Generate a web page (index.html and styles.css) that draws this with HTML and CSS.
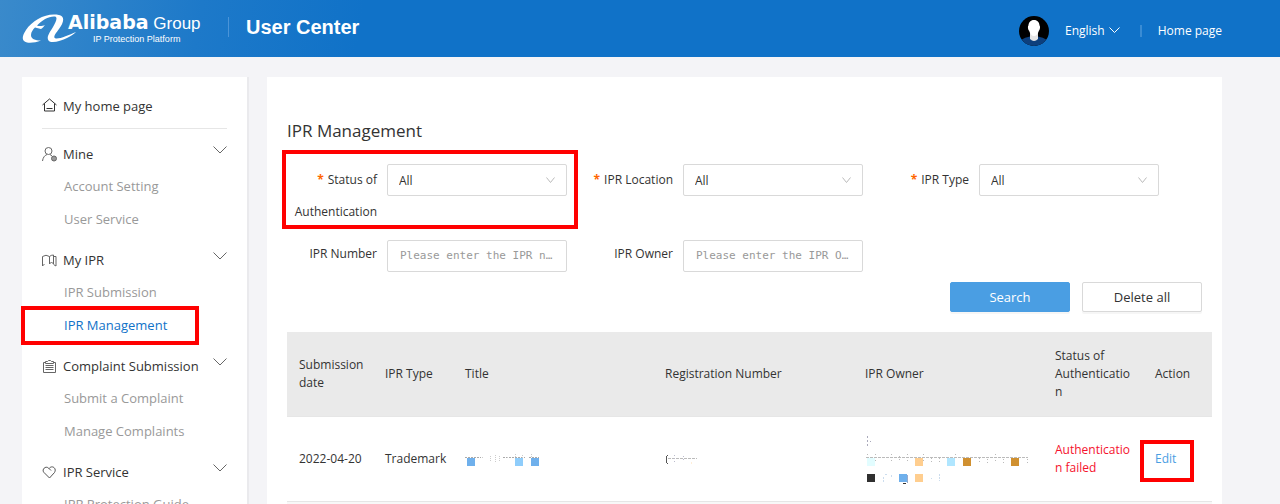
FILE: index.html
```html
<!DOCTYPE html>
<html lang="en">
<head>
  <meta charset="UTF-8" />
  <title>IPR Management</title>
  <link rel="stylesheet" href="styles.css">
</head>
<body>
  <header class="header">
    <a class="logo" href="#">
      <svg class="logo-mark" width="54" height="30" viewBox="0 0 54 30" fill="#fff">
        <path d="M33 0.500C22 0 10 7 4 16C0 22-1 27 5 28.500C9 29 14 28.500 19 26.500C13 26.500 9 25 9 21C9 18 11 15.500 13 13.500L19 15C20.500 14 22 12.500 23 11C21 12 17 12.500 15 11.500C20 6 27 2 33 2.500C36 3 34 8 31 13C28 18 24 23 26.500 26.500C29 30 39 27 45 24C49 22 52 20 54 18C47 21 38 25 34 24.500C30 24 34 19 37 15C41 10 43.500 3 38 1.300C36.500 0.700 35 0.500 33 0.500Z"/>
      </svg>
      <span class="logo-text">
        <span class="logo-name"><b>Alibaba</b> Group</span>
        <span class="logo-sub">IP Protection Platform</span>
      </span>
    </a>
    <h1 class="site-title">User Center</h1>
    <div class="header-right">
      <svg class="avatar" width="30" height="30" viewBox="0 0 30 30">
        <defs>
          <clipPath id="round"><circle cx="15" cy="15" r="15"/></clipPath>
        </defs>
        <g clip-path="url(#round)">
          <rect width="30" height="30" fill="#000"/>
          <path d="M2 30V24Q6 21 11 20.500H19Q24 21 28 24V30Z" fill="#0d3f7d"/>
          <path d="M11 17H19V23Q15 27 11 23Z" fill="#e6e6e6"/>
          <path d="M15 4C18.500 4 20.500 6.500 20.500 9.500C21.500 10 21 14 20 14.500C19 18 17 20 15 20C13 20 11 18 10 14.500C9 14 8.500 10 9.500 9.500C9.500 6.500 11.500 4 15 4Z" fill="#fff"/>
        </g>
      </svg>
      <a class="language" href="#">English
        <svg width="11" height="7" viewBox="0 0 11 7" fill="none" stroke="#fff"><path d="M0.500 0.500L5.500 5.500L10.500 0.500"/></svg>
      </a>
      <a class="home-link" href="#">Home page</a>
    </div>
  </header>

  <div class="page">
    <nav class="sidebar">
      <a class="nav-home" href="#">
        <svg width="15" height="15" viewBox="0 0 15 15" fill="none" stroke="#333"><path d="M0.500 7L7.500 1L14.500 7M2.500 5.500V13H12.500V5.500M4.500 10.500H10.500"/></svg>
        My home page
      </a>

      <div class="nav-group">
        <a class="nav-title" href="#">
          <svg width="15" height="15" viewBox="0 0 15 15" fill="none" stroke="#666"><circle cx="6.500" cy="4" r="3.500"/><path d="M0.500 14C1 10.500 2.500 8.500 5 7.500M8 7.500L10 9"/><circle cx="12" cy="11.500" r="2.500" fill="#999"/></svg>
          Mine
          <svg class="chevron" width="14" height="8" viewBox="0 0 14 8" fill="none" stroke="#666"><path d="M0.500 0.500L7 7L13.500 0.500"/></svg>
        </a>
        <a class="nav-item" href="#">Account Setting</a>
        <a class="nav-item" href="#">User Service</a>
      </div>

      <div class="nav-group">
        <a class="nav-title" href="#">
          <svg width="15" height="15" viewBox="0 0 15 15" fill="none" stroke="#666"><path d="M0.500 13V3.500Q4 1 7.500 3.500V11M0.500 12.500L2.500 11.500M7.500 3.500Q9 2 11.500 2V11L9.500 9L7.500 11M11.500 3.500L14 3.500V13L11.500 11.500"/></svg>
          My IPR
          <svg class="chevron" width="14" height="8" viewBox="0 0 14 8" fill="none" stroke="#666"><path d="M0.500 0.500L7 7L13.500 0.500"/></svg>
        </a>
        <a class="nav-item" href="#">IPR Submission</a>
        <a class="nav-item active" href="#">IPR Management<span class="mark mark-nav"></span></a>
      </div>

      <div class="nav-group">
        <a class="nav-title" href="#">
          <svg width="15" height="15" viewBox="0 0 15 15" fill="none" stroke="#666"><path d="M3.500 3.500H1.500V13.500H13.500V3.500H11.500M3.500 4.500V2.500H5.500L6.500 1.500H8.500L9.500 2.500H11.500V4.500ZM3.500 6.500H11.500M3.500 8.500H11.500M3.500 10.500H11.500"/></svg>
          Complaint Submission
          <svg class="chevron" width="14" height="8" viewBox="0 0 14 8" fill="none" stroke="#666"><path d="M0.500 0.500L7 7L13.500 0.500"/></svg>
        </a>
        <a class="nav-item" href="#">Submit a Complaint</a>
        <a class="nav-item" href="#">Manage Complaints</a>
      </div>

      <div class="nav-group">
        <a class="nav-title" href="#">
          <svg width="15" height="15" viewBox="0 0 15 15" fill="none" stroke="#555"><path d="M7.500 13L1.800 7.300C-0.500 4.500 3.500 0.500 6.500 3L9 5.500M7 3.500C9 1 12 1.500 13 4C13.500 5.500 13 6.500 12.500 7.500L7.500 13"/></svg>
          IPR Service
          <svg class="chevron" width="14" height="8" viewBox="0 0 14 8" fill="none" stroke="#666"><path d="M0.500 0.500L7 7L13.500 0.500"/></svg>
        </a>
        <a class="nav-item" href="#">IPR Protection Guide</a>
      </div>
    </nav>

    <main class="content">
      <h2>IPR Management</h2>

      <form class="search-form">
        <div class="form-row">
          <div class="field">
            <label for="status" class="required">Status of Authentication</label>
            <div class="select-box">
              <select id="status"><option>All</option></select>
              <svg width="9" height="7" viewBox="0 0 9 7" fill="none" stroke="#bbb"><path d="M0.500 0.500L4.500 5.500L8.500 0.500"/></svg>
            </div>
            <span class="mark mark-field"></span>
          </div>
          <div class="field">
            <label for="location" class="required">IPR Location</label>
            <div class="select-box">
              <select id="location"><option>All</option></select>
              <svg width="9" height="7" viewBox="0 0 9 7" fill="none" stroke="#bbb"><path d="M0.500 0.500L4.500 5.500L8.500 0.500"/></svg>
            </div>
          </div>
          <div class="field">
            <label for="type" class="required">IPR Type</label>
            <div class="select-box">
              <select id="type"><option>All</option></select>
              <svg width="9" height="7" viewBox="0 0 9 7" fill="none" stroke="#bbb"><path d="M0.500 0.500L4.500 5.500L8.500 0.500"/></svg>
            </div>
          </div>
        </div>
        <div class="form-row text-row">
          <div class="field">
            <label for="number">IPR Number</label>
            <input type="text" id="number" placeholder="Please enter the IPR number" />
          </div>
          <div class="field">
            <label for="owner">IPR Owner</label>
            <input type="text" id="owner" placeholder="Please enter the IPR Owner" />
          </div>
        </div>
        <div class="buttons">
          <button type="button" class="search-button">Search</button>
          <button type="reset" class="delete-button">Delete all</button>
        </div>
      </form>

      <table>
        <colgroup>
          <col class="col-date"><col class="col-type"><col class="col-wide"><col class="col-wide"><col><col class="col-status"><col class="col-action">
        </colgroup>
        <thead>
          <tr>
            <th>Submission date</th>
            <th>IPR Type</th>
            <th>Title</th>
            <th>Registration Number</th>
            <th>IPR Owner</th>
            <th class="status">Status of Authentication</th>
            <th>Action</th>
          </tr>
        </thead>
        <tbody>
          <tr>
            <td>2022-04-20</td>
            <td>Trademark</td>
            <td>
              <svg class="masked" width="76" height="18" viewBox="0 0 76 18">
                <path d="M0 7.500H16M38 7.500H60M64 7.500H74" stroke="#aaa" stroke-dasharray="2 1"/>
                <path d="M17.500 7V9M25.500 6V12M30.500 5V12M34.500 6V11M42.500 7V8M50.500 4V8M57.500 5V8M66.500 4V8" stroke="#ccc" stroke-dasharray="1 1"/>
                <path d="M2 8H10V16H2Z" fill="#6fb0ec"/>
                <path d="M50 8H58V16H50Z" fill="#8fcdfb"/>
                <path d="M66 8H74V16H66Z" fill="#6fb0ec"/>
              </svg>
            </td>
            <td>
              <svg class="masked" width="34" height="18" viewBox="0 0 34 18">
                <path d="M1.500 6V13M2 5.500H3M2 13.500H3" stroke="#555"/>
                <path d="M3 8.500H32" stroke="#bbb" stroke-dasharray="3 1"/>
                <path d="M9.500 5V14M18.500 6V12" stroke="#bbc" stroke-dasharray="1 2"/>
                <path d="M26 13H27" stroke="#ffddb0"/>
              </svg>
            </td>
            <td>
              <svg class="masked" width="166" height="54" viewBox="0 0 166 54">
                <path d="M2.500 4V14M5 9.500H6" stroke="#aab" stroke-dasharray="2 2"/>
                <path d="M1 25.500H163" stroke="#bbb" stroke-dasharray="3 1"/>
                <path d="M2.500 22V24M10.500 22V31M26.500 22V31M34.500 24V29M42.500 22V30M58.500 22V29M66.500 26V30M74.500 26V31M90.500 22V26M114.500 26V31M122.500 27V31M130.500 22V29M138.500 27V31M162.500 27V31" stroke="#bbb" stroke-dasharray="1 2"/>
                <path d="M2 26H10V34H2Z" fill="#e2fdff"/>
                <path d="M50 26H58V34H50Z" fill="#ffce8f"/>
                <path d="M82 26H90V34H82Z" fill="#b0e6ff"/>
                <path d="M98 26H106V34H98ZM146 26H154V34H146Z" fill="#d09030"/>
                <path d="M2 42H10V50H2Z" fill="#303030"/>
                <path d="M34 42H42V50H34Z" fill="#6fb0ec"/>
                <path d="M38 51.500H41" stroke="#333"/>
                <path d="M42.500 43V51" stroke="#9ac"/>
                <path d="M50 42H58V50H50Z" fill="#ffce8f"/>
                <path d="M18.500 45V50M20 42.500H23M26.500 43V46M66 46.500H67M74.500 42V49" stroke="#cde" stroke-dasharray="2 1"/>
              </svg>
            </td>
            <td class="status failed">Authentication failed</td>
            <td class="action"><a href="#">Edit</a><span class="mark mark-action"></span></td>
          </tr>
        </tbody>
      </table>
      <div class="table-footer"></div>
    </main>
  </div>
</body>
</html>
```
FILE: styles.css
```css
* {
  box-sizing: border-box;
}

body {
  margin: 0;
  height: 100vh;
  overflow: hidden;
  background-color: #f4f4f7;
  color: #333;
  font-family: "Open Sans", "Noto Sans", sans-serif;
  font-size: 12px;
  line-height: 18px;
}

a {
  color: inherit;
  text-decoration: none;
}

/* Header */
.header {
  display: flex;
  align-items: center;
  height: 57px;
  padding: 0 58px 0 22px;
  background: linear-gradient(100deg, #3a8acb 0, #1d79c9 200px, #1072c8 360px);
  color: white;
}

.logo {
  display: flex;
  align-items: center;
  width: 206px;
  height: 30px;
  font-family: "Liberation Sans", Arial, sans-serif;
}

.logo-mark {
  flex: none;
}

.logo-text {
  flex: none;
  margin-left: -8px;
}

.logo-name {
  display: block;
  font-size: 17px;
  line-height: 18px;
  white-space: nowrap;
}

.logo-name b {
  font-family: "DejaVu Sans", sans-serif;
  font-size: 19px;
}

.logo-sub {
  display: block;
  padding-left: 25px;
  font-size: 9px;
  line-height: 12px;
}

.site-title {
  margin: 0 0 4px;
  padding-left: 17px;
  border-left: 1px solid #4a94d8;
  font: bold 20px/20px "Liberation Sans", Arial, sans-serif;
}

.header-right {
  display: flex;
  align-items: center;
  margin: 4px 0 0 auto;
}

.language {
  display: flex;
  align-items: center;
  gap: 4px;
  margin: 0 20px 0 16px;
}

.home-link {
  padding-left: 16px;
  border-left: 2px solid #3a8cd4;
  line-height: 12px;
}

/* Page */
.page {
  display: flex;
  align-items: flex-start;
  gap: 20px;
  padding: 20px 58px 0 22px;
}

.sidebar {
  flex: none;
  width: 225px;
  padding: 13px 20px 20px;
  background-color: white;
  box-shadow: 2px 0 0 #eaeaed;
  font-size: 13px;
}

.nav-home,
.nav-title {
  display: flex;
  align-items: center;
  gap: 6px;
  height: 32px;
  white-space: nowrap;
}

.nav-home svg,
.nav-title svg {
  flex: none;
}

.nav-home {
  height: 39px;
  padding-bottom: 7px;
  border-bottom: 1px solid #e6e6e6;
  margin-bottom: 9px;
}

.nav-title .chevron {
  margin: 0 0 8px auto;
}

.nav-group {
  margin-bottom: 8px;
}

.nav-item {
  display: block;
  position: relative;
  padding-left: 22px;
  color: #999;
  line-height: 33px;
}

.nav-item.active {
  color: #1072c8;
}

.content {
  flex: 1;
  min-width: 0;
  padding: 42px 10px 20px 20px;
  background-color: white;
}

.content h2 {
  margin: 0 0 21px;
  font-size: 17px;
  font-weight: normal;
  line-height: 24px;
}

/* Search form */
.form-row {
  display: flex;
  gap: 16px;
  margin-bottom: 12px;
}

.field {
  display: flex;
  align-items: flex-start;
  position: relative;
}

.field label {
  width: 100px;
  padding-right: 10px;
  line-height: 32px;
  text-align: right;
}

.text-row {
  margin-bottom: 10px;
}

.text-row label {
  line-height: 28px;
}

.required::before {
  content: "*";
  margin-right: 4px;
  color: #f60;
  font-weight: bold;
}

.select-box {
  position: relative;
}

.select-box svg {
  position: absolute;
  top: 13px;
  right: 12px;
  pointer-events: none;
}

.field select,
.field input {
  appearance: none;
  display: block;
  width: 180px;
  height: 32px;
  padding: 0 11px;
  border: 1px solid #d9d9d9;
  border-radius: 2px;
  background-color: white;
  color: #333;
  font: 12px "Open Sans", "Noto Sans", sans-serif;
}

.field input {
  padding: 0 12px 2px;
  font: 11px "DejaVu Sans Mono", monospace;
  text-overflow: ellipsis;
}

.field input::placeholder {
  color: #999;
}

.buttons {
  display: flex;
  justify-content: flex-end;
  gap: 12px;
  margin: 0 10px 20px 0;
}

.buttons button {
  width: 120px;
  height: 30px;
  border: 1px solid #d9d9d9;
  border-radius: 2px;
  background-color: white;
  box-shadow: 0 2px 0 #f6f6f6;
  color: #333;
  font: 13px "Open Sans", "Noto Sans", sans-serif;
  cursor: pointer;
}

.buttons .search-button {
  border-color: #4a9ee3;
  background-color: #4a9ee3;
  color: white;
}

/* Table */
table {
  width: 100%;
  border-collapse: separate;
  border-spacing: 0;
  table-layout: fixed;
}

th,
td {
  height: 85px;
  padding: 15px 8px 15px 12px;
  border-bottom: 1px solid #e6e6e6;
  text-align: left;
}

th {
  background-color: #eaeaea;
  font-weight: 500;
}

.col-date {
  width: 86px;
}

.col-type {
  width: 80px;
}

.col-wide {
  width: 200px;
}

.col-status {
  width: 100px;
}

.col-action {
  width: 69px;
}

.masked {
  display: block;
}

.status {
  overflow-wrap: break-word;
}

.failed {
  color: #f5122d;
}

.action {
  position: relative;
}

.action a {
  color: #4a9ee3;
}

.table-footer {
  height: 40px;
  background-color: #f8f8f8;
}

/* Red frames round the steps to follow */
.mark {
  position: absolute;
  border: 4px solid #f00;
  pointer-events: none;
}

.mark-nav {
  top: -3px;
  left: -21px;
  width: 178px;
  height: 39px;
}

.mark-field {
  top: -14px;
  left: -5px;
  width: 296px;
  height: 79px;
}

.mark-action {
  top: 23px;
  left: -3px;
  width: 54px;
  height: 42px;
}
```
